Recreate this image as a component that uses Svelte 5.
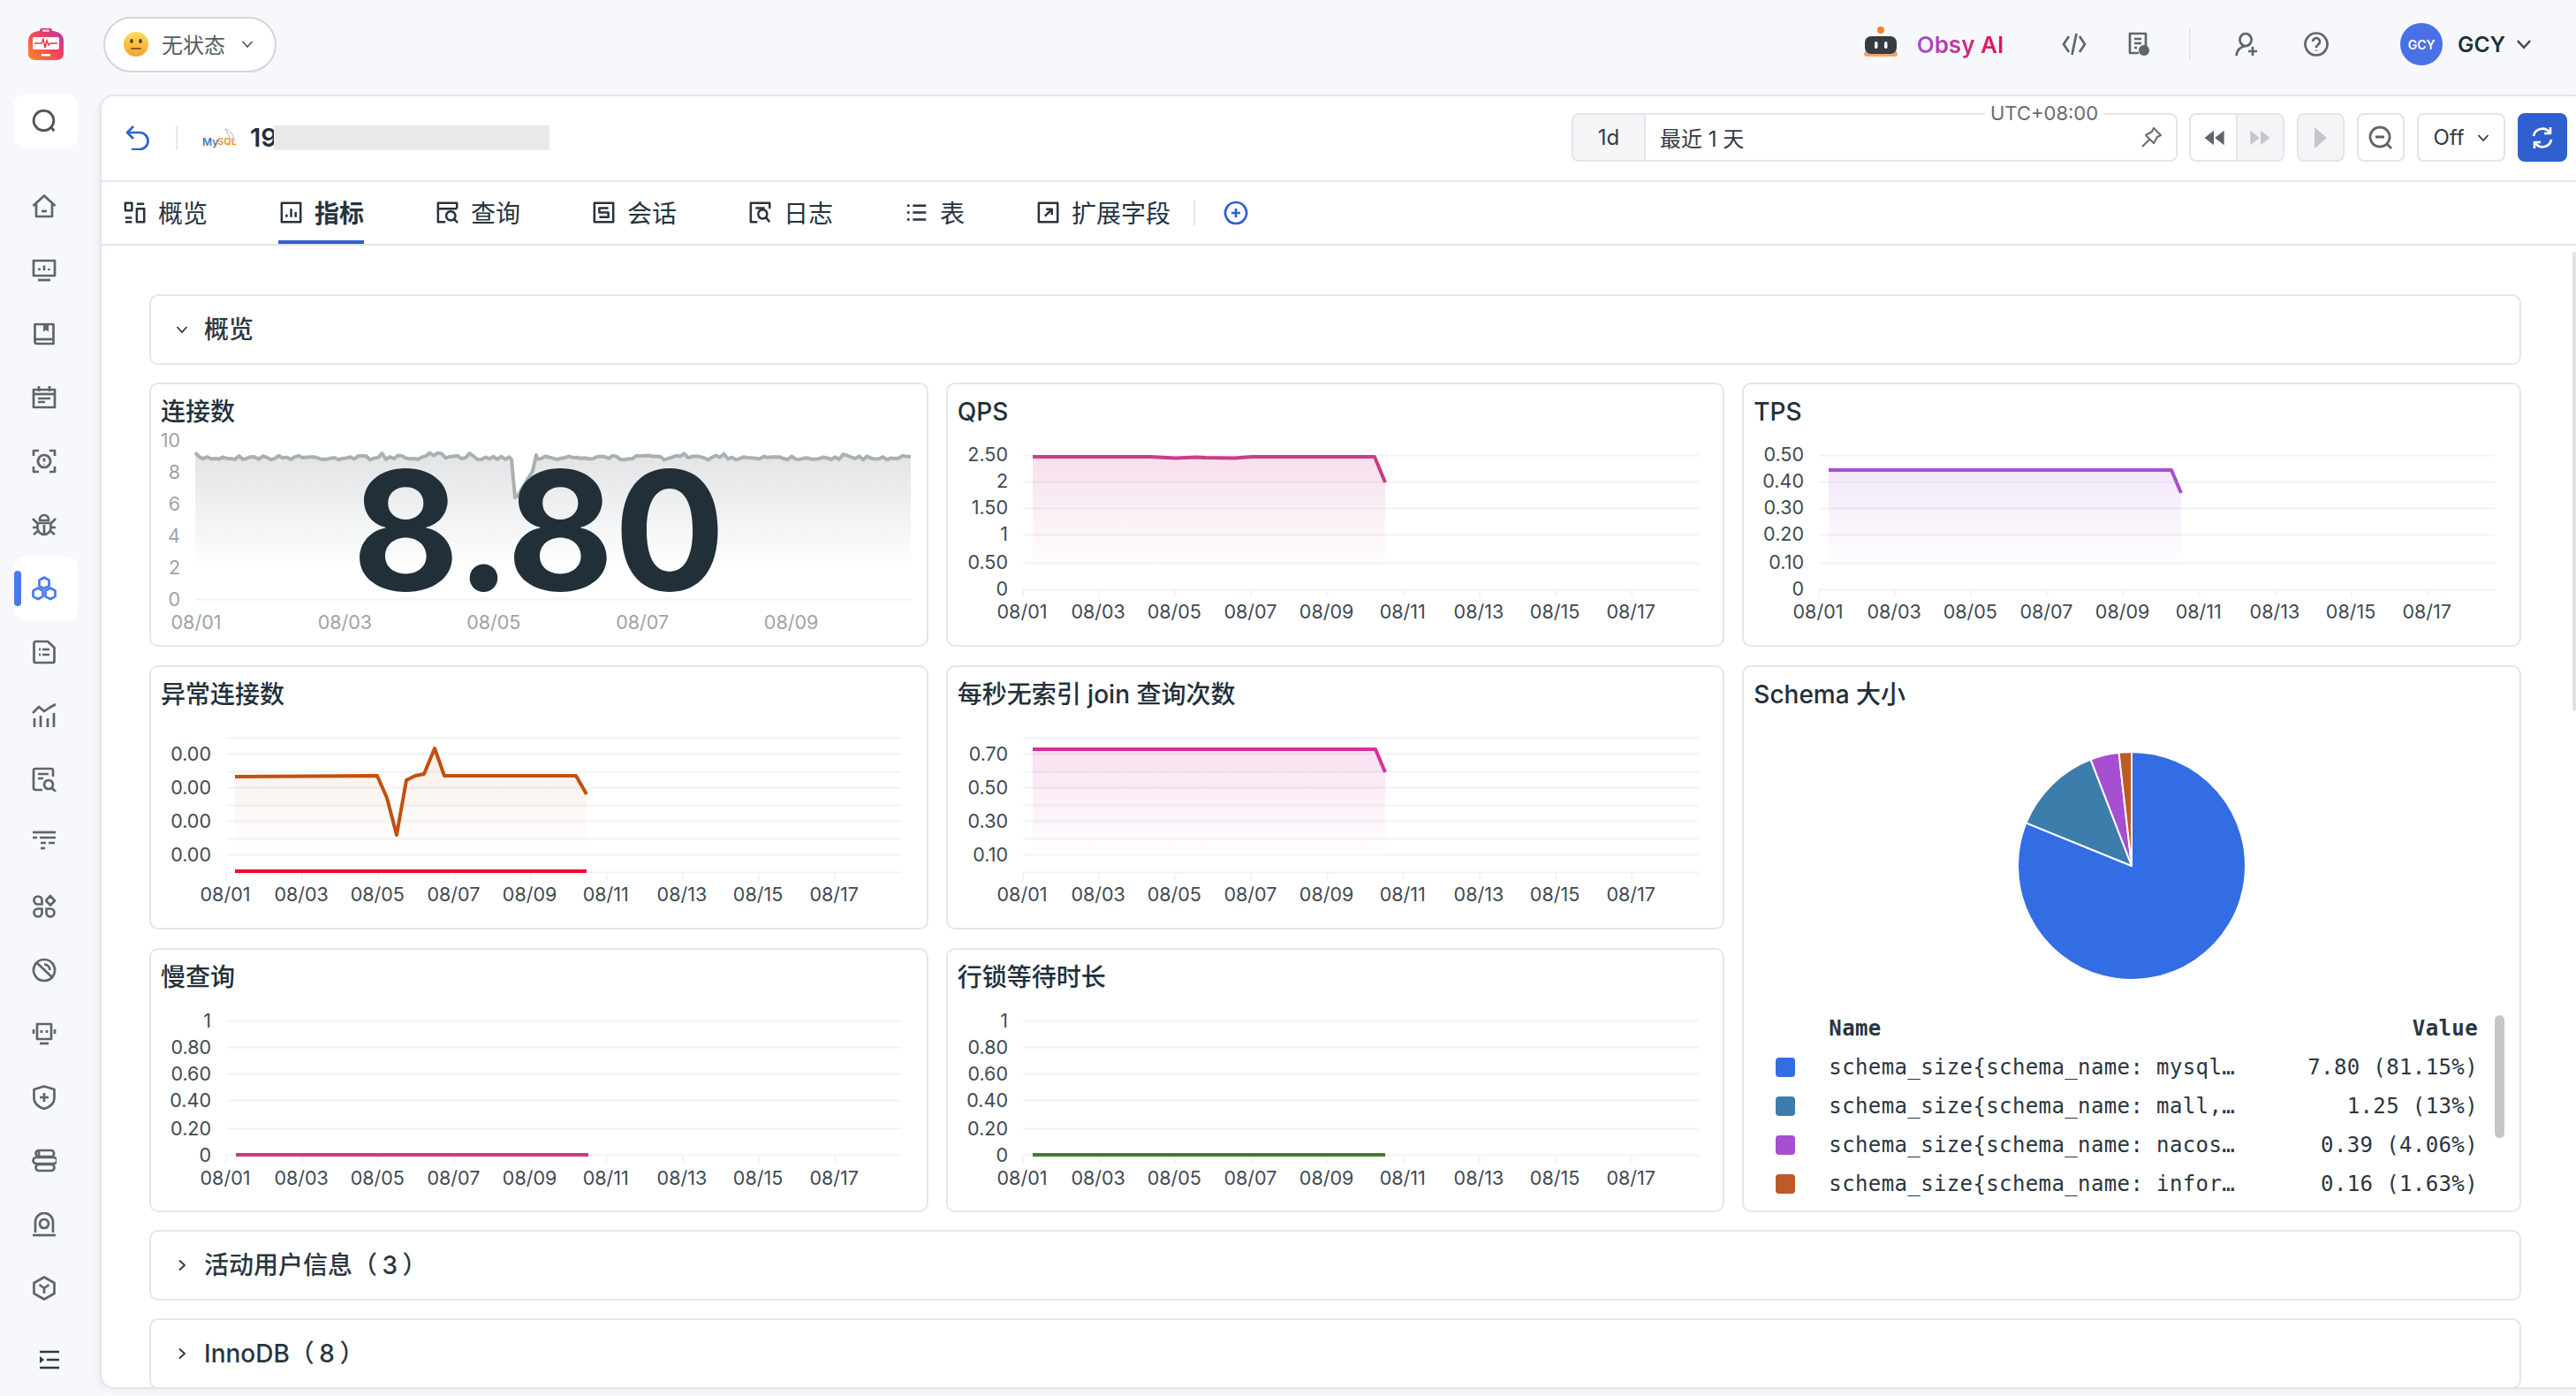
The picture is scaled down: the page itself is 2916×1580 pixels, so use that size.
<script lang="ts">
  const icons: Record<string, { d: string[]; f?: string[] }> = {
    search: { d: ["M24.5 24.5L21 20", "M13.5 3a10.5 10.5 0 1 0 .01 0Z"] },
    home: { d: ["M1.5 13L14 1.5L26.5 13", "M5 11V25H23V11", "M11 19H17"] },
    monitor: { d: ["M2 3H26V20H2Z", "M8.5 11.5V14M14 8.5V14M19.5 12V14", "M7 25H21"] },
    book: { d: ["M3.5 3H24.5V25H6a2.5 2.5 0 0 1-2.5-2.5Z", "M3.5 20H24.5"], f: ["M13 3H19V11.5L16 9.5L13 11.5Z"] },
    calendar: { d: ["M2 5H26V25H2Z", "M8 1V7M20 1V7", "M2 10H26", "M7 15H21M7 19H15"] },
    scan: { d: ["M2 8V2H8M20 2H26V8M26 20V26H20M8 26H2V20", "M14 7a7 7 0 1 0 .01 0Z", "M14 10.5V14.5M14 17V17.6"] },
    bug: { d: ["M9 8a5 5 0 0 1 10 0V9H9Z", "M6.5 12H21.5V17a7.5 8 0 0 1-15 0Z", "M14 14V25", "M1 7L6 12M27 7L22 12M1 17H6M27 17H22M2 25L7 21M26 25L21 21"] },
    hexes: { d: ["M14 1.5L19.5 4.7V11L14 14.2L8.5 11V4.7Z", "M7 13.5L12.5 16.7V23L7 26.2L1.5 23V16.7Z", "M21 13.5L26.5 16.7V23L21 26.2L15.5 23V16.7Z"] },
    doc: { d: ["M2.5 4a2 2 0 0 1 2-2H18L25.5 9V24a2 2 0 0 1-2 2H4.5a2 2 0 0 1-2-2Z", "M8 11H10M12 11H20M8 17H10M12 17H20"] },
    chart: { d: ["M1 11L8 4L14 9L20 5L27 1", "M3 17V27M10 14V27M18 17V27M25 11V27"] },
    searchdoc: { d: ["M12 26H4a2 2 0 0 1-2-2V4a2 2 0 0 1 2-2H22a2 2 0 0 1 2 2V11", "M7 8H19M7 13H13", "M19 15a5 5 0 1 0 .01 0Z", "M23 24L27 28"] },
    filter: { d: ["M1 2H27", "M1 8H6M9 8H27", "M10 14H16M19 14H26", "M10 20H15"] },
    apps: { d: ["M7 2.5a4.5 4.5 0 0 1 4.5 4.5V11.5H7a4.5 4.5 0 0 1 0-9Z", "M21 2L26 7.5L21 12.5L16.5 8V6.5Z", "M7 16.5H11.5V21a4.5 4.5 0 0 1-4.5 4.5a4.5 4.5 0 0 1 0-9Z", "M16.5 16.5H21a4.5 4.5 0 0 1 0 9a4.5 4.5 0 0 1-4.5-4.5Z"] },
    gauge: { d: ["M14 2a12 12 0 1 0 .01 0Z", "M5.5 5.5L24 23", "M14 7.5a6.5 6.5 0 0 1 6.5 6.5"] },
    robot: { d: ["M6 3H22V20H6Z", "M11 10V13M17 10V13", "M2 9V14M26 9V14", "M9 25H19"] },
    shield: { d: ["M14 1.5L25.5 5V15C25.5 21 20 25 14 27C8 25 2.5 21 2.5 15V5Z", "M14 9V19M9 14H19"] },
    server: { d: ["M8 2H22a3 3 0 0 1 3 3V6a3 3 0 0 1-3 3H8Z", "M8 2a3.5 3.5 0 0 0 0 7", "M5 10H25a3 3 0 0 1 0 7H5a3.5 3.5 0 0 1 0-7Z", "M8 18H22a3.5 3.5 0 0 1 0 7H8a3.5 3.5 0 0 1 0-7Z"] },
    camera: { d: ["M4 23V11a10 10 0 0 1 20 0V23", "M1 26H27", "M14 8a5 5 0 1 0 .01 0Z"] },
    box: { d: ["M14 1.5L25.5 8V20L14 26.5L2.5 20V8Z", "M8.5 10L14 14L19.5 10M14 14V20"] },
    back: { d: ["M10 1L3 8L10 15", "M3 8H17a9.5 9.5 0 0 1 0 19H8"] },
    overview: { d: ["M2 2H10V11H2Z", "M16 3H25", "M2 20H10", "M16 9H25V25H16Z", "M2 25H10"] },
    metrics: { d: ["M2 2H25V25H2Z", "M8 19V16M13.5 19V9M19 19V13"] },
    query: { d: ["M11 25H2V2H25V9", "M2 9H25", "M17.5 12a5.5 5.5 0 1 0 .01 0Z", "M21.5 21.5L26 26"] },
    session: { d: ["M2 2H25V25H2Z", "M19 8H8V13.5H19V19H8"] },
    log: { d: ["M10 25H2V2H25V9", "M8 8H19", "M16.5 10a5.5 5.5 0 1 0 .01 0Z", "M20.5 19.5L25 25"] },
    table: { d: ["M2 5H5M9 5H25M2 13.5H5M9 13.5H25M2 22H5M9 22H25"] },
    extend: { d: ["M2 2H25V25H2Z", "M9.5 18L17.5 10M11 9.5H18V16.5"] },
    plus: { d: ["M14 2a12 12 0 1 0 .01 0Z", "M14 9V19M9 14H19"] },
    code: { d: ["M8 5L2 14L8 23", "M20 5L26 14L20 23", "M16.5 2L11.5 26"] },
    report: { d: ["M22 16V2H4V24H14", "M9 8H17M9 13H17M9 18H12"], f: ["M20 15a6 6 0 1 0 .01 0Z"] },
    useradd: { d: ["M13 2a6.5 7 0 1 0 .01 0Z", "M2.5 27C3 21 7 17 13 16", "M21 17V27M16 22H26"] },
    help: { d: ["M14 1.5a12.5 12.5 0 1 0 .01 0Z", "M10 11a4 4 0 1 1 6 3.5c-1.5 1-2 2-2 3.5", "M14 20.5V21.5"] },
    pin: { d: ["M17 3L25 11L21 13L17 20L8 11L15 7Z", "M12 16L4 24"] },
    zoomout: { d: ["M13 2a11 11 0 1 0 .01 0Z", "M21 21L26 26", "M8 13H18"] },
    refresh: { d: ["M4 12a10 10 0 0 1 18-4", "M24 16a10 10 0 0 1-18 4", "M23 2V9H16", "M5 26V19H12"] }
  };

  const navItems = ["home", "monitor", "book", "calendar", "scan", "bug", "hexes", "doc", "chart", "searchdoc", "filter", "apps", "gauge", "robot", "shield", "server", "camera", "box"];
  const tabs = [
    ["overview", "概览"], ["metrics", "指标"], ["query", "查询"], ["session", "会话"],
    ["log", "日志"], ["table", "表"], ["extend", "扩展字段"]
  ];

  const dates = ["08/01", "08/03", "08/05", "08/07", "08/09", "08/11", "08/13", "08/15", "08/17"];
  const ysA = [82, 112, 142, 172, 204, 234];
  const lyA = [81, 111, 141, 171, 203, 233];
  const ysB = [82, 100, 120, 138, 158, 176, 196, 214, 234];
  const ysBl = [100, 138, 176, 214];

  const flat = (y, endY, knee = 486, end = 497) => [[98, y], [knee, y], [end, endY]];

  const charts = [
    { title: "QPS", ys: ysA, ly: lyA, labels: ["2.50", "2", "1.50", "1", "0.50", "0"], color: "#c93d85", fade: 0.16, row: 259, base: 234,
      pts: [[98, 84], [231, 84], [260, 85.5], [283, 84.5], [294, 85], [326, 85.5], [346, 84], [485, 84], [497, 113]] },
    { title: "TPS", ys: ysA, ly: lyA, labels: ["0.50", "0.40", "0.30", "0.20", "0.10", "0"], color: "#a64fd0", fade: 0.13, row: 259, base: 234, pts: flat(99, 125) },
    { title: "异常连接数", ys: ysB, ly: ysBl, labels: ["0.00", "0.00", "0.00", "0.00"], color: "#c2500e", fade: 0.1, row: 259, base: 234,
      pts: [[97, 126], [258, 125], [269, 150], [280, 192], [291, 130], [301, 125], [311, 123], [323, 94], [334, 125], [483, 125], [495, 146]],
      extra: { y: 233, color: "#ee0a2c" } },
    { title: "每秒无索引 join 查询次数", ys: ysB, ly: ysBl, labels: ["0.70", "0.50", "0.30", "0.10"], color: "#d6309c", fade: 0.15, row: 259, base: 234, pts: flat(95, 121) },
    { title: "慢查询", ys: ysA, ly: ysA, labels: ["1", "0.80", "0.60", "0.40", "0.20", "0"], color: "#c93d7e", fade: 0, row: 260, base: 234, pts: flat(234, 234, 300), noFill: true },
    { title: "行锁等待时长", ys: ysA, ly: ysA, labels: ["1", "0.80", "0.60", "0.40", "0.20", "0"], color: "#3f7d2e", fade: 0, row: 260, base: 234, pts: flat(234, 234, 300), noFill: true }
  ];

  // small wobble for the connections line, same on every load
  let seed = 7;
  const rnd = () => ((seed = (seed * 16807) % 2147483647) / 2147483647);
  const connPts: number[][] = [];
  for (let x = 52; x <= 863; x += 4.5) {
    if (x > 408 && x < 438) continue;
    let y = 85 + (rnd() - 0.5) * 5;
    if (rnd() > 0.9) y -= 3;
    connPts.push([x, y]);
    if (x > 403 && x < 408) connPts.push([410, 87], [414, 130], [417, 128], [434, 100], [438, 82]);
  }
  const line = (p) => p.map((q, i) => (i ? "L" : "M") + q[0] + " " + q[1]).join("");
  const area = (p, base) => line(p) + `L${p[p.length - 1][0]} ${base}L${p[0][0]} ${base}Z`;

  const slices = [
    { v: 81.15, c: "#336de4", name: "schema_size{schema_name: mysql…", val: "7.80 (81.15%)" },
    { v: 13, c: "#3d7dab", name: "schema_size{schema_name: mall,…", val: "1.25 (13%)" },
    { v: 4.06, c: "#a64fd0", name: "schema_size{schema_name: nacos…", val: "0.39 (4.06%)" },
    { v: 1.79, c: "#bc5a28", name: "schema_size{schema_name: infor…", val: "0.16 (1.63%)" }
  ];
  const pie = (() => {
    let a = 0;
    return slices.map((s) => {
      const b = a + (s.v / 100) * Math.PI * 2;
      const p = (t) => `${130 + 129 * Math.sin(t)} ${130 - 129 * Math.cos(t)}`;
      const d = `M130 130L${p(a)}A129 129 0 ${b - a > Math.PI ? 1 : 0} 1 ${p(b)}Z`;
      a = b;
      return { d, c: s.c };
    });
  })();
</script>

{#snippet icon(name, cls = "")}
  <svg class="ic {cls}" viewBox="0 0 28 28" fill="none" stroke="currentColor" stroke-linejoin="round">
    {#each icons[name].d as d}<path {d} />{/each}
    {#each icons[name].f ?? [] as d}<path {d} fill="currentColor" stroke="none" />{/each}
  </svg>
{/snippet}

{#snippet chevron(cls = "")}
  <svg class="chev {cls}" viewBox="0 0 14 14" fill="none" stroke="currentColor"><path d="M1.5 4L7 10L12.5 4" /></svg>
{/snippet}

<div class="app">
  <header class="top">
    <svg class="logo" viewBox="0 0 40 36">
      <defs>
        <linearGradient id="lg" x1="1" y1="0" x2="0" y2="1">
          <stop offset="0" stop-color="#b335b8" /><stop offset=".45" stop-color="#f2405f" /><stop offset="1" stop-color="#fb8a1e" />
        </linearGradient>
      </defs>
      <path d="M0 14C0 7 6 3.5 13 3V2.5C13 1 14 0 15.5 0H24.500C26 0 27 1 27 2.500V3C34 3.500 40 7 40 14V28C40 33 37 36 32 36H8C3 36 0 33 0 28Z" fill="url(#lg)" />
      <rect x="16" y="1.500" width="8" height="2.500" rx="1" fill="#f7c3de" />
      <rect x="5" y="10" width="30" height="14" rx="2" fill="#fff" />
      <path d="M7 17H15L17 12.500L19 22L21 14L23 19L25 17H33" stroke="#e8344e" stroke-width="1.500" fill="none" />
      <rect x="15" y="29" width="10" height="2.500" fill="#fff" />
    </svg>
    <button class="status">
      <svg class="emoji" viewBox="0 0 28 28">
        <defs>
          <linearGradient id="eg" x1="0" y1="0" x2="0" y2="1"><stop offset="0" stop-color="#fbdc5e" /><stop offset="1" stop-color="#f3a42c" /></linearGradient>
        </defs>
        <circle cx="14" cy="14" r="14" fill="url(#eg)" />
        <ellipse cx="9" cy="10.5" rx="1.8" ry="2.6" fill="#5c3d1e" /><ellipse cx="19" cy="10.5" rx="1.8" ry="2.6" fill="#5c3d1e" />
        <rect x="8" y="18" width="12" height="2" rx="1" fill="#8a5a22" />
      </svg>
      <span class="status-text">无状态</span>
      {@render chevron()}
    </button>
    <div class="top-right">
      <div class="obsy">
        <svg class="robot" viewBox="0 0 48 40">
          <ellipse cx="24" cy="24" rx="20" ry="16" fill="#fff" />
          <circle cx="24" cy="4" r="4" fill="#f5822a" />
          <rect x="5" y="28" width="38" height="6" rx="3" fill="#f5a36a" />
          <rect x="6" y="11" width="36" height="20" rx="7" fill="#343c44" />
          <rect x="17" y="17" width="3.5" height="8" rx="1.7" fill="#fff" /><rect x="28" y="17" width="3.5" height="8" rx="1.7" fill="#fff" />
        </svg>
        <span class="obsy-text">Obsy AI</span>
      </div>
      {@render icon("code", "t-code")}
      {@render icon("report", "t-report")}
      <i class="vsep"></i>
      {@render icon("useradd", "t-user")}
      {@render icon("help", "t-help")}
      <div class="avatar">GCY</div>
      <span class="uname">GCY</span>
      {@render chevron("uchev")}
    </div>
  </header>

  <nav class="side">
    <div class="nav-search">{@render icon("search")}</div>
    <div class="nav-list">
      {#each navItems as n}
        <div class="nav-item" class:active={n === "hexes"}>{@render icon(n)}</div>
      {/each}
    </div>
    <svg class="collapse" viewBox="0 0 22 22" fill="none" stroke="currentColor" stroke-width="2.6">
      <path d="M0 2H22M8 11H22M0 20H22" /><path d="M0 7L5 11L0 15Z" fill="currentColor" stroke="none" />
    </svg>
  </nav>

  <main class="panel">
    <div class="head">
      <span class="back">{@render icon("back")}</span>
      <i class="head-sep"></i>
      <svg class="mysql" viewBox="0 0 42 24">
        <path d="M26 2C30 2 35 8 37 16M26 2C29 8 30 9 32 14" stroke="#9aa2aa" stroke-width=".8" fill="none" />
        <text x="0" y="21" class="my">My</text><text x="17" y="20" class="sql">SQL</text>
      </svg>
      <span class="host">19</span>
      <i class="redact"></i>
      <div class="tools">
        <div class="range">
          <span class="range-short">1d</span>
          <span class="range-text">最近 1 天</span>
          <span class="utc">UTC+08:00</span>
          {@render icon("pin", "pin")}
        </div>
        <div class="btn rw">
          <span class="half"><svg viewBox="0 0 24 16"><path d="M12 1L3 8L12 15ZM22 1L13 8L22 15Z" /></svg></span>
          <span class="half off"><svg viewBox="0 0 24 16"><path d="M2 1L11 8L2 15ZM12 1L21 8L12 15Z" /></svg></span>
        </div>
        <div class="btn play off"><svg viewBox="0 0 16 24"><path d="M1 0L15 12L1 24Z" /></svg></div>
        <div class="btn square">{@render icon("zoomout")}</div>
        <div class="btn auto"><span>Off</span>{@render chevron()}</div>
        <div class="btn sync">{@render icon("refresh")}</div>
      </div>
    </div>

    <div class="tabs">
      {#each tabs as t, i}
        <div class="tab" class:on={i === 1}>{@render icon(t[0])}<span>{t[1]}</span></div>
      {/each}
      <i class="tab-sep"></i>
      <span class="tab-add">{@render icon("plus")}</span>
    </div>

    <div class="body">
      <section class="group"><svg class="chev gchev" viewBox="0 0 14 14" fill="none" stroke="currentColor"><path d="M1.5 4L7 10L12.5 4" /></svg><span>概览</span></section>

      <div class="grid">
        <article class="card">
          <h3>连接数</h3>
          <svg class="plot" viewBox="2 53 878 244">
            <defs>
              <linearGradient id="conn" x1="0" y1="0" x2="0" y2="1">
                <stop offset="0" stop-color="#8d959b" stop-opacity=".26" /><stop offset=".8" stop-color="#8d959b" stop-opacity="0" />
              </linearGradient>
            </defs>
            <path d={area(connPts, 245)} fill="url(#conn)" />
            <path d="M52 245.5H863" class="gridline" />
            <path d={line(connPts)} class="series" stroke="#a9b0b3" />
            {#each ["10", "8", "6", "4", "2", "0"] as l, i}
              <text x="35" y={65 + i * 36} class="lbl dim" text-anchor="end">{l}</text>
            {/each}
            {#each dates.slice(0, 5) as d, i}
              <text x={53 + i * 168.4} y="271" class="lbl dim" text-anchor="middle">{d}</text>
            {/each}
          </svg>
          <div class="bignum">8.80</div>
        </article>

        {#each charts.slice(0, 2) as c, k}
          {@render chartCard(c, "a" + k)}
        {/each}
        {@render chartCard(charts[2], "b0")}
        {@render chartCard(charts[3], "b1")}

        <article class="card pie-card">
          <h3>Schema 大小</h3>
          <svg class="pie" viewBox="0 0 260 260">
            {#each pie as s}<path d={s.d} fill={s.c} stroke="#fff" stroke-width="2" stroke-linejoin="round" />{/each}
          </svg>
          <div class="legend">
            <div class="lrow lhead"><i></i><span class="lname">Name</span><span class="lval">Value</span></div>
            {#each slices as s}
              <div class="lrow"><i style="background:{s.c}"></i><span class="lname">{s.name}</span><span class="lval">{s.val}</span></div>
            {/each}
            <b class="lscroll"></b>
          </div>
        </article>

        {@render chartCard(charts[4], "c0")}
        {@render chartCard(charts[5], "c1")}
      </div>

      <section class="group"><svg class="chev gchev closed" viewBox="0 0 14 14" fill="none" stroke="currentColor"><path d="M4 1.5L10 7L4 12.5" /></svg><span>活动用户信息（ 3 ）</span></section>
      <section class="group"><svg class="chev gchev closed" viewBox="0 0 14 14" fill="none" stroke="currentColor"><path d="M4 1.5L10 7L4 12.5" /></svg><span>InnoDB（ 8 ）</span></section>
    </div>
    <b class="page-scroll"></b>
  </main>
</div>

{#snippet chartCard(c, id)}
  <article class="card">
    <h3>{c.title}</h3>
    <svg class="plot" viewBox="2 53 878 244">
      <defs>
        <linearGradient id={"g" + id} x1="0" y1="0" x2="0" y2="1">
          <stop offset="0" stop-color={c.color} stop-opacity={c.fade} /><stop offset=".85" stop-color={c.color} stop-opacity="0" />
        </linearGradient>
      </defs>
      {#each c.ys as y}
        <path d="M87 {y + 0.5}H852" class="gridline" />
      {/each}
      {#each dates as d, i}
        <path d="M{87 + i * 86.15} 235V243" class="gridline" />
        <text x={86 + i * 86.15} y={c.row} class="lbl" text-anchor="middle">{d}</text>
      {/each}
      {#each c.labels as l, i}
        <text x="70" y={c.ly[i]} class="lbl" text-anchor="end">{l}</text>
      {/each}
      {#if !c.noFill}<path d={area(c.pts, c.base)} fill="url(#g{id})" />{/if}
      <path d={line(c.pts)} class="series" stroke={c.color} />
      {#if c.extra}<path d="M97 {c.extra.y}H495" class="series" stroke={c.extra.color} />{/if}
    </svg>
  </article>
{/snippet}

<style>
  :global(body) { margin: 0; background: #f6f8fc; }
  .app { width: 2916px; height: 1580px; overflow: hidden; display: grid; grid-template-columns: 113px 1fr; grid-template-rows: 107px 1fr;
    background: #f6f8fc; color: #22303a; font-family: Inter, "Noto Sans CJK SC", sans-serif; }
  .ic { width: 28px; height: 28px; stroke-width: 2.7; display: block; flex: none; }
  .chev { width: 14px; height: 14px; stroke-width: 1.8; flex: none; }
  i { display: block; }

  .top { grid-column: 1 / 3; display: flex; align-items: center; padding: 0 0 7px 32px; }
  .logo { width: 40px; height: 36px; }
  .status { margin-left: 45px; width: 196px; height: 63px; box-sizing: border-box; border: 2px solid #d3d5d8; border-radius: 32px; background: #fff;
    display: flex; align-items: center; padding: 0 0 0 21px; font: 24px Inter, "Noto Sans CJK SC", sans-serif; color: #565c62; }
  .emoji { width: 28px; height: 28px; margin-right: 15px; }
  .status-text { margin-top: -2px; }
  .status .chev { margin-left: 18px; }
  .top-right { margin-left: auto; display: flex; align-items: center; height: 50px; color: #5f6568; }
  .obsy { display: flex; align-items: center; }
  .robot { width: 48px; height: 40px; }
  .obsy-text { margin-left: 17px; font-size: 26px; font-weight: 600; background: linear-gradient(90deg, #a24fd6, #e8114a); -webkit-background-clip: text; background-clip: text; color: transparent; }
  .t-code { margin-left: 66px; }
  .t-report { margin-left: 45px; }
  .vsep { width: 2px; height: 36px; background: #e6e7ea; margin-left: 43px; }
  .t-user { margin-left: 49px; }
  .t-help { margin-left: 51px; }
  .avatar { margin-left: 81px; width: 48px; height: 48px; border-radius: 50%; background: #4a70e8; color: #fff; font-size: 14px; font-weight: 600; display: flex; align-items: center; justify-content: center; }
  .uname { margin-left: 17px; font-size: 24.5px; font-weight: 600; color: #22303a; }
  .uchev { margin: 0 50px 0 12px; color: #444; width: 18px; height: 18px; }

  .side { display: flex; flex-direction: column; padding-left: 16px; height: 1473px; color: #5f6568; }
  .nav-search { width: 72px; height: 60px; background: #fff; border-radius: 12px; display: flex; align-items: center; justify-content: center; }
  .nav-search .ic { width: 30px; height: 30px; color: #50565a; margin-right: 4px; }
  .nav-list { margin-top: 31px; display: grid; grid-auto-rows: 72px; }
  .nav-item { width: 72px; display: flex; align-items: center; justify-content: center; position: relative; }
  .nav-item .ic { margin-right: 4px; }
  .nav-item.active { background: #fff; border-radius: 12px; color: #4a78ee; }
  .nav-item.active::before { content: ""; position: absolute; left: 0; top: 16px; width: 8px; height: 40px; border-radius: 4px; background: #4a78ee; }
  .collapse { width: 22px; height: 22px; margin: 34px 0 0 29px; color: #2d3a45; }

  .panel { background: #fff; border: 2px solid #e3e4ec; border-width: 2px 0 0 2px; border-radius: 16px 0 0 16px; height: 1465px; box-sizing: border-box; overflow: hidden; position: relative;
    box-shadow: -3px 2px 6px rgba(40, 50, 60, .05); border-bottom: 2px solid #e3e4ec; }
  .head { height: 97px; box-sizing: border-box; border-bottom: 2px solid #e3e4ec; display: flex; align-items: center; padding: 0 0 2px 26px; }
  .back { color: #3060cf; height: 28px; }
  .head-sep { width: 2px; height: 28px; background: #e6e7ea; margin-left: 30px; }
  .mysql { width: 42px; height: 24px; margin-left: 28px; }
  .my { font: 600 12px Inter, sans-serif; fill: #3e7ab8; }
  .sql { font: 600 11px Inter, sans-serif; fill: #e8962a; }
  .host { margin-left: 12px; font-size: 29px; font-weight: 600; width: 27px; white-space: nowrap; }
  .redact { width: 312px; height: 28px; background: #e9e9e9; position: relative; }
  .tools { margin-left: auto; display: flex; align-items: center; gap: 14px; padding-right: 10px; color: #5f6568; }
  .range { width: 686px; height: 55px; box-sizing: border-box; border: 2px solid #e3e4ec; border-radius: 8px; display: flex; align-items: center; position: relative; font-size: 24px; color: #33393f; margin-right: -1px; }
  .range-short { width: 80px; height: 100%; background: #f5f5f7; border-right: 2px solid #e3e4ec; border-radius: 6px 0 0 6px; display: flex; align-items: center; justify-content: center; }
  .range-text { margin-left: 16px; }
  .utc { position: absolute; left: 466px; top: -15px; padding: 0 6px; background: #fff; font-size: 22px; line-height: 26px; color: #666c72; }
  .range :global(.pin) { margin-left: auto; margin-right: 14px; color: #6b7075; stroke-width: 2.2; }
  .btn { height: 55px; box-sizing: border-box; border: 2px solid #e3e4ec; border-radius: 8px; display: flex; align-items: center; justify-content: center; }
  .btn svg { fill: currentColor; }
  .rw { width: 108px; overflow: hidden; }
  .half { flex: 1; height: 100%; display: flex; align-items: center; justify-content: center; }
  .half svg { width: 28px; height: 20px; }
  .half.off { background: #f5f5f7; border-left: 2px solid #e3e4ec; color: #c4c6ca; }
  .play { width: 54px; background: #f5f5f7; color: #c4c6ca; }
  .play svg { width: 16px; height: 24px; }
  .square { width: 54px; }
  .square .ic { fill: none; stroke-width: 2.8; }
  .auto { width: 100px; gap: 14px; font-size: 24px; color: #33393f; }
  .auto svg { fill: none; }
  .sync { width: 56px; background: #3060cf; border-color: #3060cf; color: #fff; }
  .sync .ic { fill: none; }

  .tabs { height: 72px; box-sizing: border-box; border-bottom: 2px solid #e3e4ec; display: flex; align-items: center; gap: 82px; padding-left: 25px; }
  .tab { display: flex; align-items: center; gap: 13px; height: 70px; position: relative; font-size: 28px; color: #27333d; }
  .tab .ic { width: 26px; height: 26px; }
  .tab span { margin-top: -3px; }
  .tab.on { font-weight: 700; }
  .tab.on::after { content: ""; position: absolute; left: -2px; right: 0; bottom: 0; height: 4px; background: #3060cf; }
  .tab-sep { width: 2px; height: 28px; background: #e3e4ec; margin-left: -56px; }
  .tab-add { color: #3060cf; margin-left: -50px; }

  .body { padding: 55px 62px 0 54px; display: flex; flex-direction: column; gap: 20px; }
  .group { height: 80px; box-sizing: border-box; border: 2px solid #e5e6ec; border-radius: 10px; display: flex; align-items: center; padding-left: 28px; font-size: 28px; font-weight: 500; color: #2a3640; }
  .group span { margin: -5px 0 0 18px; word-spacing: -2px; }
  .grid { display: grid; grid-template-columns: repeat(3, 1fr); grid-template-rows: repeat(3, 299px); gap: 21px 20px; }
  .card { border: 2px solid #e5e6ec; border-radius: 10px; box-sizing: border-box; overflow: hidden; position: relative; background: #fff; }
  h3 { margin: 0; height: 51px; box-sizing: border-box; padding: 13px 0 0 11px; font-size: 28px; line-height: 36px; font-weight: 500; color: #22303a; }
  .plot { display: block; width: 878px; height: 244px; }
  .gridline { stroke: #f2f3f5; stroke-width: 2; fill: none; }
  .series { fill: none; stroke-width: 4; stroke-linejoin: round; }
  .lbl { font-size: 21.5px; fill: #3f4a52; dominant-baseline: central; }
  .lbl.dim { fill: #9ea3a7; }
  .bignum { position: absolute; left: 0; right: 0; top: 85px; text-align: center; font-size: 187px; line-height: 160px; font-weight: 700; color: #212f39; }
  .pie-card { grid-column: 3; grid-row: 2 / 4; }
  .pie { display: block; width: 260px; height: 260px; margin: 44px auto 0; }
  .legend { margin-top: 32px; position: relative; font: 24px "DejaVu Sans Mono", monospace; letter-spacing: .38px; color: #2a3640; }
  .lrow { height: 44px; display: flex; align-items: center; padding: 0 47px 0 36px; }
  .lrow i { width: 22px; height: 22px; border-radius: 4px; flex: none; }
  .lname { margin-left: 38px; white-space: nowrap; }
  .lval { margin-left: auto; white-space: nowrap; }
  .lhead { font-weight: 700; }
  .lscroll { position: absolute; right: 17px; top: 7px; width: 11px; height: 139px; border-radius: 6px; background: #c6c6c6; }
  .page-scroll { position: absolute; right: 0; top: 176px; width: 4px; height: 520px; border-radius: 2px; background: #e2e2e2; }
</style>
